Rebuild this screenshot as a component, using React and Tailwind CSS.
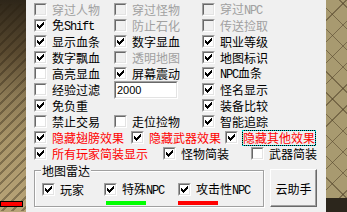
import React from "react";

const L = ({ children }) => (
  <span className="font-['Liberation_Mono',monospace] tracking-[-1.2px]">{children}</span>
);

function Check() {
  return (
    <svg width="9" height="9" viewBox="0 0 9 9" shapeRendering="crispEdges" className="block">
      <g fill="#000">
        <rect x="7" y="1" width="1" height="1" />
        <rect x="6" y="2" width="2" height="1" />
        <rect x="1" y="3" width="1" height="1" />
        <rect x="5" y="3" width="3" height="1" />
        <rect x="1" y="4" width="2" height="1" />
        <rect x="4" y="4" width="3" height="1" />
        <rect x="1" y="5" width="5" height="1" />
        <rect x="2" y="6" width="3" height="1" />
        <rect x="3" y="7" width="1" height="1" />
      </g>
    </svg>
  );
}

function Box({ checked, disabled }) {
  return (
    <span className="block w-[13px] h-[13px] shrink-0 border border-t-[#a0a0a0] border-l-[#a0a0a0] border-b-white border-r-white">
      <span
        className={
          disabled
            ? "block w-[11px] h-[11px] border border-t-[#696969] border-l-[#696969] border-b-[#e3e3e3] border-r-[#e3e3e3] bg-[#f0f0f0]"
            : "block w-[11px] h-[11px] border border-t-[#696969] border-l-[#696969] border-b-[#e3e3e3] border-r-[#e3e3e3] bg-white"
        }
      >
        {checked && <Check />}
      </span>
    </span>
  );
}

function CB({ label, checked, disabled, red, focus }) {
  const color = disabled ? "text-[#a0a0a0]" : red ? "text-[#ff0000]" : "text-black";
  return (
    <div className="flex items-center h-[13px]">
      <Box checked={checked} disabled={disabled} />
      {focus ? (
        <span className="ml-[4px] border border-dotted border-[#00d0d0] bg-black">
          <span className={"block bg-[#f0f0f0] whitespace-nowrap leading-[14px] " + color}>{label}</span>
        </span>
      ) : (
        <span className={"ml-[5px] whitespace-nowrap " + color}>{label}</span>
      )}
    </div>
  );
}

function Input2000() {
  return (
    <div className="w-[64px] h-[18px] shrink-0 border border-t-[#a0a0a0] border-l-[#a0a0a0] border-b-white border-r-white">
      <div className="h-full border border-t-[#696969] border-l-[#696969] border-b-[#e3e3e3] border-r-[#e3e3e3] bg-white pl-[1px] font-['Liberation_Sans',sans-serif] text-[11px] leading-[14px] text-black">
        2000
      </div>
    </div>
  );
}

export default function App() {
  return (
    <div className="w-[347px] h-[212px] flex overflow-hidden font-['Noto_Sans_CJK_SC',sans-serif] text-[12px] leading-[13px]">
      {/* left game strip */}
      <div className="w-[26px] h-full shrink-0 flex flex-col justify-end pb-[5px] bg-[linear-gradient(180deg,#2e2619_0%,#5a4a30_25%,#8c7a55_45%,#a89468_65%,#b8a478_100%)]">
        <div className="h-full w-full bg-[repeating-linear-gradient(135deg,rgba(40,30,15,0.35)_0px,rgba(40,30,15,0.35)_2px,transparent_2px,transparent_7px)]" />
        <div className="w-[23px] h-[6px] border border-black bg-[#ff0000] shrink-0 mt-[-10px]" />
      </div>

      {/* panel */}
      <div className="w-[300px] h-full shrink-0 bg-[#f0f0f0] pl-[8px] pt-[3px] flex flex-col">
        <div className="flex flex-col gap-[3px]">
          <div className="grid grid-cols-[80px_88px_1fr] grid-rows-[13px]">
            <CB label="穿过人物" disabled />
            <CB label="穿过怪物" disabled />
            <CB label={<>穿过<L>NPC</L></>} disabled />
          </div>
          <div className="grid grid-cols-[80px_88px_1fr] grid-rows-[13px]">
            <CB label={<>免<L>Shift</L></>} checked />
            <CB label="防止石化" disabled />
            <CB label="传送捡取" disabled />
          </div>
          <div className="grid grid-cols-[80px_88px_1fr] grid-rows-[13px]">
            <CB label="显示血条" checked />
            <CB label="数字显血" checked />
            <CB label="职业等级" checked />
          </div>
          <div className="grid grid-cols-[80px_88px_1fr] grid-rows-[13px]">
            <CB label="数字飘血" checked />
            <CB label="透明地图" disabled />
            <CB label="地图标识" checked />
          </div>
          <div className="grid grid-cols-[80px_88px_1fr] grid-rows-[13px]">
            <CB label="高亮显血" />
            <CB label="屏幕震动" checked />
            <CB label={<><L>NPC</L>血条</>} checked />
          </div>
          <div className="grid grid-cols-[80px_88px_1fr] grid-rows-[13px] items-center">
            <CB label="经验过滤" />
            <Input2000 />
            <CB label="怪名显示" checked />
          </div>
          <div className="grid grid-cols-[80px_88px_1fr] grid-rows-[13px]">
            <CB label="免负重" checked />
            <div />
            <CB label="装备比较" checked />
          </div>
          <div className="grid grid-cols-[80px_88px_1fr] grid-rows-[13px]">
            <CB label="禁止交易" />
            <CB label="走位捡物" />
            <CB label="智能追踪" checked />
          </div>
          <div className="grid grid-cols-[97px_94px_1fr] grid-rows-[13px]">
            <CB label="隐藏翅膀效果" checked red />
            <CB label="隐藏武器效果" checked red />
            <CB label="隐藏其他效果" checked red focus />
          </div>
          <div className="grid grid-cols-[129px_88px_1fr] grid-rows-[13px]">
            <CB label="所有玩家简装显示" checked red />
            <CB label="怪物简装" checked />
            <CB label="武器简装" />
          </div>
        </div>

        {/* bottom area */}
        <div className="flex items-start mt-[5px]">
          <div className="relative mt-[5px] w-[230px] h-[37px] border border-[#a0a0a0] shadow-[inset_1px_1px_0_#ffffff,1px_1px_0_#ffffff] pl-[7px] pt-[12px]">
            <span className="absolute left-[6px] top-[-7px] px-[1px] bg-[#f0f0f0] text-black whitespace-nowrap">
              地图雷达
            </span>
            <div className="grid grid-cols-[62px_74px_1fr]">
              <div className="flex flex-col">
                <CB label="玩家" checked />
              </div>
              <div className="flex flex-col">
                <CB label={<>特殊<L>NPC</L></>} checked />
                <div className="ml-[2px] mt-[5px] w-[40px] h-[4px] bg-[#00ff00]" />
              </div>
              <div className="flex flex-col">
                <CB label={<>攻击性<L>NPC</L></>} checked />
                <div className="mt-[5px] w-[40px] h-[4px] bg-[#ff0000]" />
              </div>
            </div>
          </div>
          <button className="ml-[6px] mt-[4px] w-[47px] h-[38px] bg-[#f0f0f0] border border-t-white border-l-white border-b-[#696969] border-r-[#696969] shadow-[inset_-1px_-1px_0_#a0a0a0] text-black text-[12px] font-['Noto_Sans_CJK_SC',sans-serif]">
            云助手
          </button>
        </div>
      </div>

      {/* right game strip */}
      <div className="flex-1 h-full flex flex-col">
        <div className="flex-1 bg-[#a89a70] bg-[repeating-linear-gradient(45deg,transparent_0px,transparent_14px,rgba(80,65,40,0.55)_14px,rgba(80,65,40,0.55)_15px),repeating-linear-gradient(135deg,transparent_0px,transparent_14px,rgba(80,65,40,0.55)_14px,rgba(80,65,40,0.55)_15px)]" />
        <div className="h-[14px] bg-[#2c261c]" />
      </div>
    </div>
  );
}
